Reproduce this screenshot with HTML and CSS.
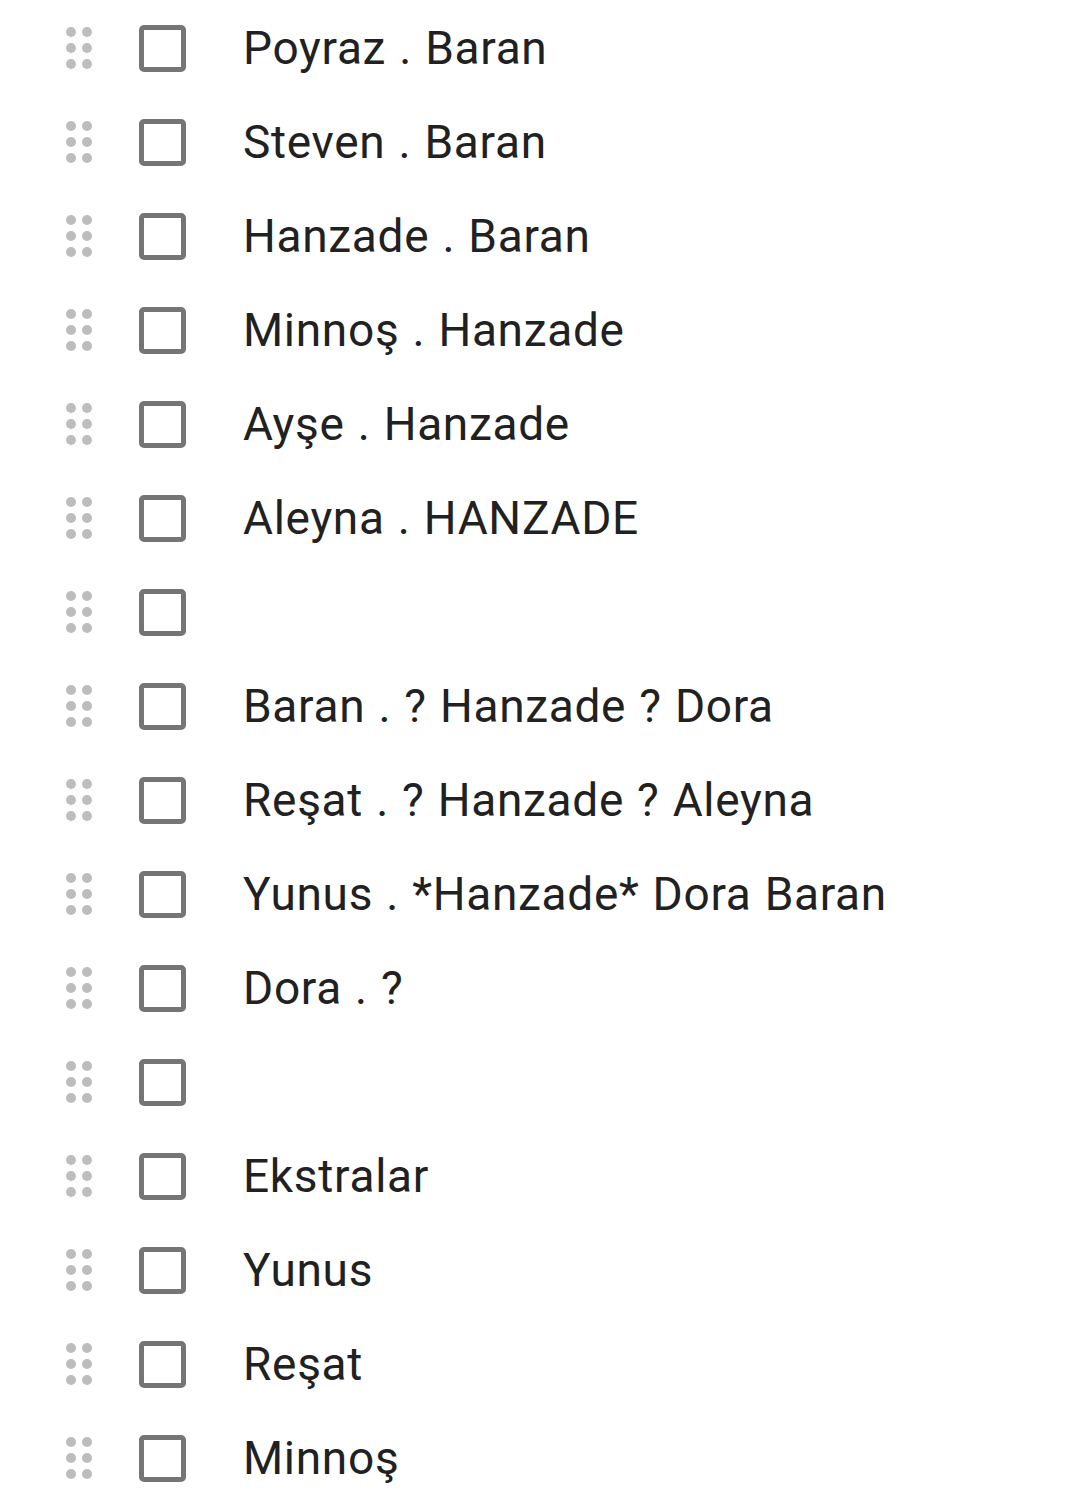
FILE: index.html
```html
<!DOCTYPE html>
<html lang="tr">
<head>
<meta charset="utf-8">
<link rel="stylesheet" href="styles.css">
</head>
<body>
<ul class="list">
  <li class="row"><span class="handle"><i></i><i></i><i></i><i></i><i></i><i></i></span><span class="box"></span><span class="label">Poyraz . Baran</span></li>
  <li class="row"><span class="handle"><i></i><i></i><i></i><i></i><i></i><i></i></span><span class="box"></span><span class="label">Steven . Baran</span></li>
  <li class="row"><span class="handle"><i></i><i></i><i></i><i></i><i></i><i></i></span><span class="box"></span><span class="label">Hanzade . Baran</span></li>
  <li class="row"><span class="handle"><i></i><i></i><i></i><i></i><i></i><i></i></span><span class="box"></span><span class="label">Minnoş . Hanzade</span></li>
  <li class="row"><span class="handle"><i></i><i></i><i></i><i></i><i></i><i></i></span><span class="box"></span><span class="label">Ayşe . Hanzade</span></li>
  <li class="row"><span class="handle"><i></i><i></i><i></i><i></i><i></i><i></i></span><span class="box"></span><span class="label">Aleyna . HANZADE</span></li>
  <li class="row"><span class="handle"><i></i><i></i><i></i><i></i><i></i><i></i></span><span class="box"></span><span class="label"></span></li>
  <li class="row"><span class="handle"><i></i><i></i><i></i><i></i><i></i><i></i></span><span class="box"></span><span class="label">Baran . ? Hanzade ? Dora</span></li>
  <li class="row"><span class="handle"><i></i><i></i><i></i><i></i><i></i><i></i></span><span class="box"></span><span class="label">Reşat . ? Hanzade ? Aleyna</span></li>
  <li class="row"><span class="handle"><i></i><i></i><i></i><i></i><i></i><i></i></span><span class="box"></span><span class="label">Yunus . *Hanzade* Dora Baran</span></li>
  <li class="row"><span class="handle"><i></i><i></i><i></i><i></i><i></i><i></i></span><span class="box"></span><span class="label">Dora . ?</span></li>
  <li class="row"><span class="handle"><i></i><i></i><i></i><i></i><i></i><i></i></span><span class="box"></span><span class="label"></span></li>
  <li class="row"><span class="handle"><i></i><i></i><i></i><i></i><i></i><i></i></span><span class="box"></span><span class="label">Ekstralar</span></li>
  <li class="row"><span class="handle"><i></i><i></i><i></i><i></i><i></i><i></i></span><span class="box"></span><span class="label">Yunus</span></li>
  <li class="row"><span class="handle"><i></i><i></i><i></i><i></i><i></i><i></i></span><span class="box"></span><span class="label">Reşat</span></li>
  <li class="row"><span class="handle"><i></i><i></i><i></i><i></i><i></i><i></i></span><span class="box"></span><span class="label">Minnoş</span></li>
</ul>
</body>
</html>
```
FILE: styles.css
```css
html, body {
  margin: 0;
  padding: 0;
  background: #ffffff;
}
body {
  font-family: Roboto, "Noto Sans", sans-serif;
  color: #212121;
}
.list {
  list-style: none;
  margin: 0;
  padding: 1px 0 0 0;
}
.row {
  height: 94px;
  display: flex;
  align-items: center;
  padding-left: 66px;
}
.handle {
  display: grid;
  grid-template-columns: 10px 10px;
  grid-auto-rows: 10px;
  column-gap: 6px;
  row-gap: 6px;
  width: 26px;
}
.handle i {
  display: block;
  width: 10px;
  height: 10px;
  border-radius: 50%;
  background: #bdbdbd;
}
.box {
  box-sizing: border-box;
  width: 47px;
  height: 47px;
  border: 5.5px solid #757575;
  border-radius: 5px;
  margin-left: 47px;
}
.label {
  margin-left: 57px;
  font-size: 46px;
  line-height: 1;
  letter-spacing: 0.7px;
  word-spacing: 1px;
  white-space: nowrap;
}
```
